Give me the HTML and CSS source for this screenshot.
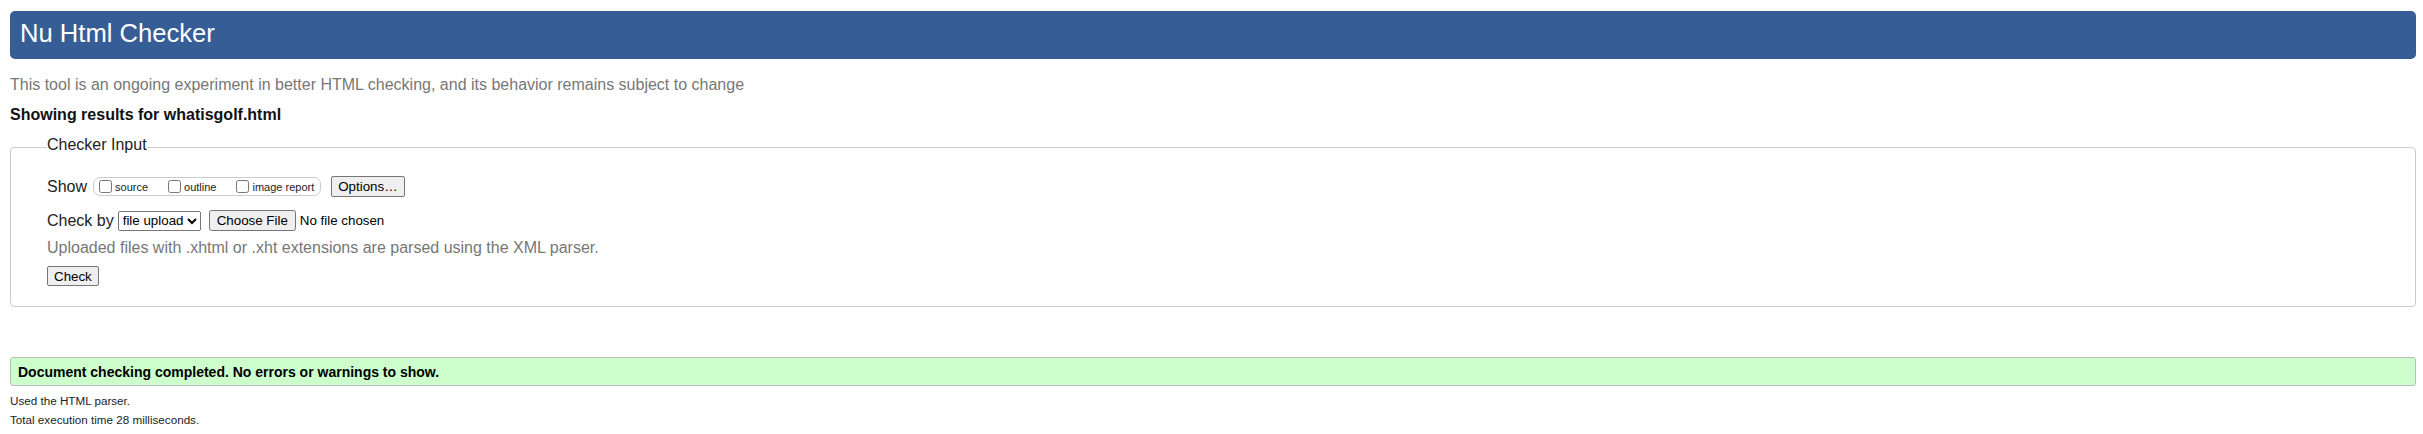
FILE: index.html
```html
<!DOCTYPE html>
<html lang="en">
<head>
<meta charset="utf-8">
<title>Showing results for whatisgolf.html - Nu Html Checker</title>
<link rel="stylesheet" href="styles.css">
</head>
<body>
<div class="page">
  <h1 class="title">Nu Html Checker</h1>
  <p class="intro">This tool is an ongoing experiment in better HTML checking, and its behavior remains subject to change</p>
  <p class="showing">Showing results for whatisgolf.html</p>
  <form class="checker">
    <fieldset class="checker-input">
      <legend class="legend">Checker Input</legend>
      <div class="row row-show">
        <span class="row-label">Show</span>
        <span class="opts">
          <label class="opt"><input type="checkbox" class="cb">source</label>
          <label class="opt"><input type="checkbox" class="cb">outline</label>
          <label class="opt"><input type="checkbox" class="cb">image report</label>
        </span>
        <button type="button" class="btn btn-options">Options…</button>
      </div>
      <div class="row row-by">
        <span class="row-label">Check by</span>
        <select class="sel"><option>file upload</option></select>
        <input type="file" class="file">
      </div>
      <p class="hint">Uploaded files with .xhtml or .xht extensions are parsed using the XML parser.</p>
      <div class="row row-check"><button type="button" class="btn">Check</button></div>
    </fieldset>
  </form>
  <p class="success">Document checking completed. No errors or warnings to show.</p>
  <p class="details">Used the HTML parser.</p>
  <p class="details">Total execution time 28 milliseconds.</p>
</div>
</body>
</html>
```

FILE: styles.css
```css
html, body {
  margin: 0;
  padding: 0;
  background: #fff;
}

body {
  font-family: "Liberation Sans", Arial, sans-serif;
  color: #222;
}

.page {
  padding: 11px 7px 0 10px;
}

.title {
  margin: 0;
  background: #365d95;
  color: #fff;
  font-size: 25.6px;
  font-weight: normal;
  line-height: 29px;
  padding: 8px 10px 11px;
  border-radius: 5px;
}

.intro {
  margin: 17px 0 0;
  font-size: 16px;
  line-height: 18px;
  color: #777;
}

.showing {
  margin: 12px 0 0;
  font-size: 16px;
  line-height: 18px;
  font-weight: bold;
  color: #111;
}

.checker {
  margin: 12px 0 0;
}

.checker-input {
  margin: 0;
  padding: 17px 20px 20px 36px;
  border: 1px solid #ccc;
  border-radius: 4px;
  min-width: 0;
}

.legend {
  padding: 0 0 5px;
  font-size: 16px;
  line-height: 18px;
  color: #222;
}

.row {
  display: flex;
  align-items: center;
}

.row-show,
.row-by {
  height: 21px;
}

.row-by {
  margin-top: 13px;
}

.row-label {
  font-size: 16px;
}

.row-show .row-label {
  margin-right: 6px;
}

.opts {
  display: inline-flex;
  align-items: center;
  height: 19px;
  box-sizing: border-box;
  border: 1px solid #ccc;
  border-radius: 7px;
  padding: 0 6px 0 1px;
}

.opt {
  display: inline-flex;
  align-items: center;
  font-size: 11px;
  margin-right: 16px;
}

.opt:last-child {
  margin-right: 0;
}

.cb {
  width: 13px;
  height: 13px;
  margin: 0 3px 0 4px;
}

.btn {
  font: 13.333px "Liberation Sans", Arial, sans-serif;
  color: #000;
  background: #efefef;
  border: 1px solid #767676;
  border-radius: 2px;
  padding: 1px 6px;
  height: 21px;
}

.btn-options {
  margin-left: 10px;
}

.sel {
  margin-left: 4px;
  font: 13.333px "Liberation Sans", Arial, sans-serif;
  height: 20px;
  color: #000;
}

.file {
  margin-left: 8px;
  font: 13.333px "Liberation Sans", Arial, sans-serif;
  color: #000;
}

.hint {
  margin: 8px 0 0;
  font-size: 16px;
  line-height: 18px;
  color: #777;
}

.row-check {
  margin-top: 9px;
}

.row-check .btn {
  height: 20px;
}

.success {
  margin: 50px 0 0;
  background: #ccffcc;
  border: 1px solid #bbb;
  border-radius: 3px;
  padding: 6px 7px 4px;
  font-size: 14px;
  line-height: 17px;
  font-weight: bold;
  color: #000;
}

.details {
  margin: 8px 0 0;
  font-size: 11.667px;
  line-height: 14px;
  color: #222;
}

.details + .details {
  margin-top: 5px;
}
```
